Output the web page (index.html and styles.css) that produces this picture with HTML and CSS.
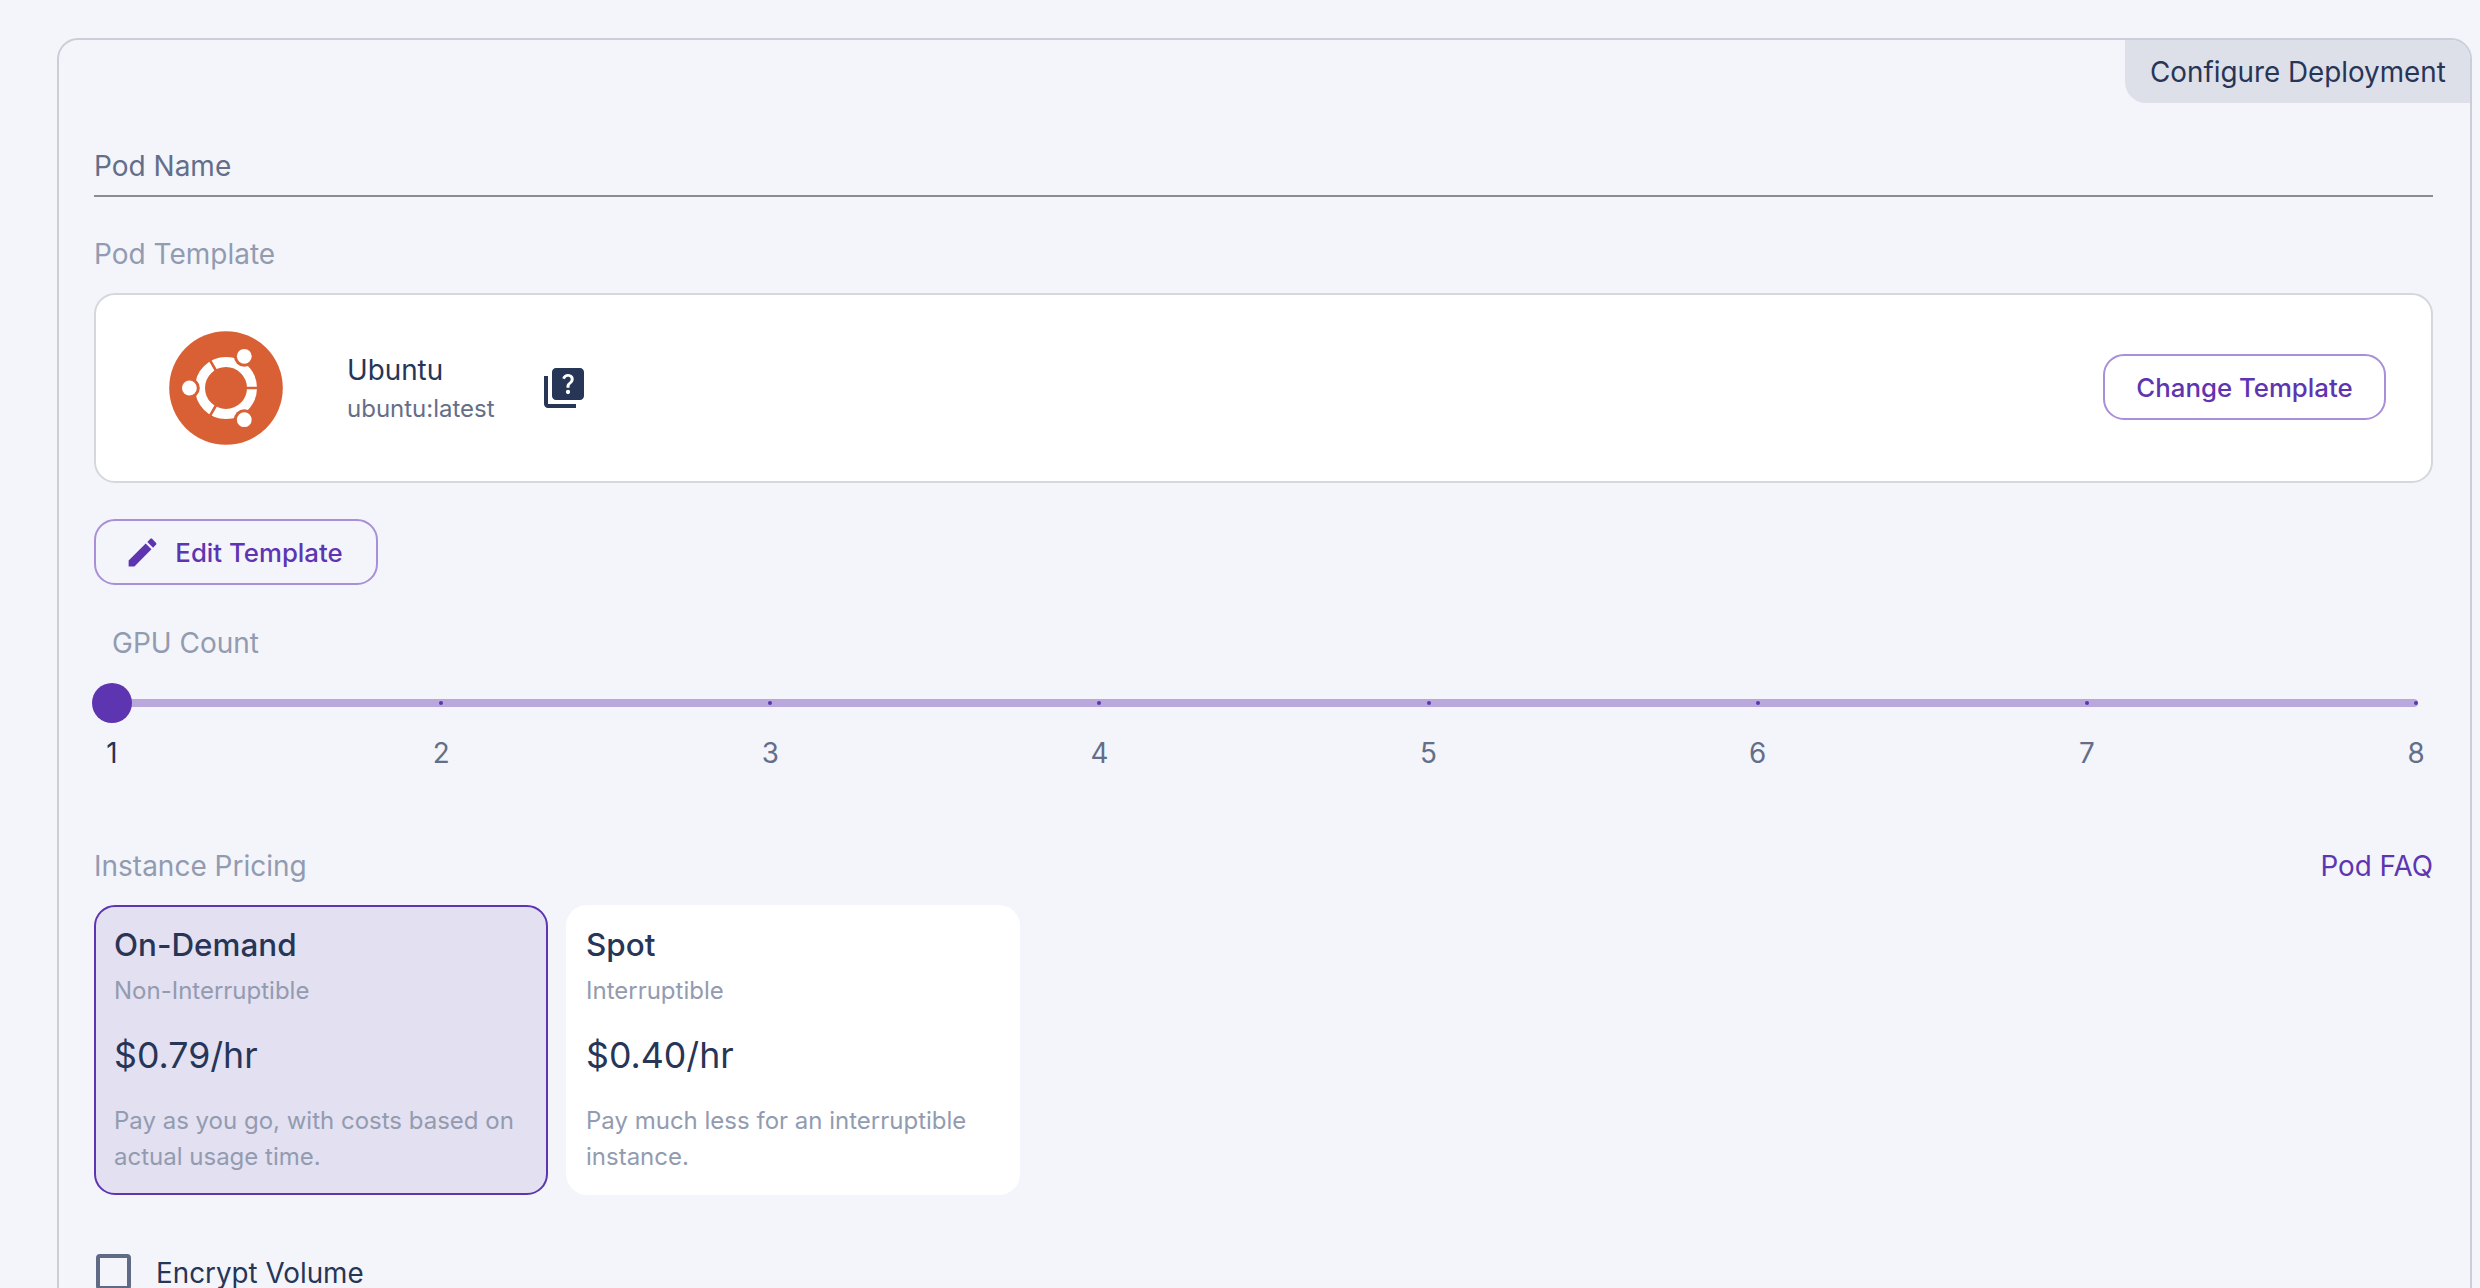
FILE: index.html
```html
<!DOCTYPE html>
<html lang="en">
<head>
    <meta charset="UTF-8">
    <meta name="viewport" content="width=device-width, initial-scale=1.0">
    <title>Configure Deployment</title>
    <link rel="stylesheet" href="styles.css">
</head>
<body>
    <div class="panel">
        <div class="panel-tab">Configure Deployment</div>

        <!-- Pod name -->
        <div class="name-field">Pod Name</div>

        <!-- Template -->
        <div class="field-label template-label">Pod Template</div>
        <div class="template-card">
            <svg class="ubuntu-logo" viewBox="0 0 114 114" aria-hidden="true">
                <circle cx="57" cy="57" r="56.8" fill="#d96034"/>
                <circle cx="57" cy="57" r="26" fill="none" stroke="#fff" stroke-width="10"/>
                <path d="M76 57H90M47.5 40.5L40.5 28.4M47.5 73.5L40.5 85.6" stroke="#d96034" stroke-width="2.6"/>
                <circle cx="75.3" cy="25.3" r="10.4" fill="#d96034"/>
                <circle cx="75.3" cy="88.7" r="10.4" fill="#d96034"/>
                <circle cx="20.4" cy="57" r="10.4" fill="#d96034"/>
                <circle cx="75.3" cy="25.3" r="7.4" fill="#fff"/>
                <circle cx="75.3" cy="88.7" r="7.4" fill="#fff"/>
                <circle cx="20.4" cy="57" r="7.4" fill="#fff"/>
            </svg>
            <div class="template-info">
                <div class="template-name">Ubuntu</div>
                <div class="template-image">ubuntu:latest</div>
            </div>
            <svg class="quiz-icon" viewBox="0 0 24 24" aria-hidden="true">
                <path d="M4 6H2v14c0 1.1.9 2 2 2h14v-2H4V6zm16-4H8c-1.1 0-2 .9-2 2v12c0 1.1.9 2 2 2h12c1.1 0 2-.9 2-2V4c0-1.1-.9-2-2-2zm-5.99 13c-.59 0-1.05-.47-1.05-1.05 0-.59.47-1.04 1.05-1.04.59 0 1.04.45 1.04 1.04-.01.58-.45 1.05-1.04 1.05zm2.5-6.17c-.63.93-1.23 1.21-1.56 1.81-.13.24-.18.4-.18 1.18h-1.52c0-.41-.06-1.08.26-1.65.41-.73 1.18-1.16 1.63-1.8.48-.68.21-1.94-1.14-1.94-.88 0-1.32.67-1.5 1.23l-1.37-.57C11.51 5.96 12.52 5 13.99 5c1.23 0 2.08.56 2.51 1.26.37.61.58 1.73.01 2.57z"/>
            </svg>
            <button class="outline-btn change-btn">Change Template</button>
        </div>

        <button class="outline-btn edit-btn">
            <svg class="edit-icon" viewBox="0 0 24 24" aria-hidden="true">
                <path d="M3 17.25V21h3.75L17.81 9.94l-3.75-3.75L3 17.25zM20.71 7.04c.39-.39.39-1.02 0-1.41l-2.34-2.34c-.39-.39-1.02-.39-1.41 0l-1.83 1.83 3.75 3.75 1.83-1.83z"/>
            </svg>
            Edit Template
        </button>

        <!-- GPU slider -->
        <div class="field-label gpu-label">GPU Count</div>
        <div class="slider">
            <div class="slider-track">
                <span class="slider-mark"></span>
                <span class="slider-mark"></span>
                <span class="slider-mark"></span>
                <span class="slider-mark"></span>
                <span class="slider-mark"></span>
                <span class="slider-mark"></span>
                <span class="slider-mark"></span>
                <span class="slider-mark"></span>
            </div>
            <div class="slider-thumb"></div>
        </div>
        <div class="slider-labels">
            <span class="slider-label current">1</span>
            <span class="slider-label">2</span>
            <span class="slider-label">3</span>
            <span class="slider-label">4</span>
            <span class="slider-label">5</span>
            <span class="slider-label">6</span>
            <span class="slider-label">7</span>
            <span class="slider-label">8</span>
        </div>

        <!-- Pricing -->
        <div class="pricing-header">
            <span class="field-label">Instance Pricing</span>
            <a class="faq-link" href="#">Pod FAQ</a>
        </div>
        <div class="pricing-cards">
            <div class="price-card selected">
                <div class="price-title">On-Demand</div>
                <div class="price-sub">Non-Interruptible</div>
                <div class="price-value">$0.79/hr</div>
                <div class="price-desc">Pay as you go, with costs based on actual usage time.</div>
            </div>
            <div class="price-card">
                <div class="price-title">Spot</div>
                <div class="price-sub">Interruptible</div>
                <div class="price-value">$0.40/hr</div>
                <div class="price-desc">Pay much less for an interruptible instance.</div>
            </div>
        </div>

        <div class="check-row">
            <span class="checkbox"></span>
            <span class="check-label">Encrypt Volume</span>
        </div>
    </div>
</body>
</html>
```

FILE: styles.css
```css
* {
    box-sizing: border-box;
}
html, body {
    height: 1288px;
    overflow: hidden;
}
body {
    margin: 0;
    background-color: #f3f5fa;
    font-family: Inter, "Noto Sans", sans-serif;
    font-size: 27.8px;
    line-height: 40px;
    color: #273557;
}
.panel {
    position: relative;
    margin: 38px 8px 0 57px;
    min-height: 1400px;
    padding: 106px 37px 0 35px;
    border: 2px solid #c9ced9;
    border-radius: 21px;
}
.panel-tab {
    position: absolute;
    top: 0;
    right: 0;
    width: 345px;
    height: 63px;
    padding: 12px 0 0 25px;
    background-color: #dde0e8;
    border-radius: 0 19px 0 21px;
}
.name-field {
    height: 51px;
    border-bottom: 2px solid #8c8c90;
    font-size: 28px;
    color: #646e89;
}
.field-label {
    font-size: 28px;
    color: #929bb0;
}
.template-label {
    margin-top: 37px;
}
.template-card {
    display: flex;
    align-items: center;
    height: 190px;
    margin-top: 19px;
    padding: 0 45px 0 73px;
    background-color: #fff;
    border: 2px solid #d5d7de;
    border-radius: 21px;
}
.ubuntu-logo {
    width: 114px;
    height: 114px;
    flex: none;
}
.template-info {
    margin-left: 64px;
}
.template-name {
    line-height: 40px;
}
.template-image {
    margin-top: 1px;
    font-size: 24px;
    line-height: 36px;
    color: #646e89;
}
.quiz-icon {
    width: 48px;
    height: 48px;
    margin-left: 45px;
    margin-right: auto;
    fill: #273557;
}
.outline-btn {
    display: flex;
    align-items: center;
    justify-content: center;
    height: 66px;
    background: transparent;
    border: 2px solid #a98fd8;
    border-radius: 21px;
    color: #5e35b1;
    font-family: inherit;
    font-size: 25.8px;
    font-weight: 500;
    cursor: pointer;
}
.change-btn {
    width: 283px;
    margin-bottom: 2px;
}
.edit-btn {
    width: 284px;
    margin-top: 36px;
    gap: 14px;
    padding-right: 11px;
}
.edit-icon {
    width: 37px;
    height: 37px;
    fill: #5e35b1;
}
.gpu-label {
    margin-top: 38px;
    padding-left: 18px;
}
.slider {
    position: relative;
    height: 40px;
    margin-top: 20px;
    padding-top: 16px;
}
.slider-track {
    display: flex;
    align-items: center;
    justify-content: space-between;
    height: 8px;
    margin: 0 15px 0 16px;
    background-color: #b9a8dc;
    border-radius: 4px;
}
.slider-mark {
    width: 4px;
    height: 4px;
    background-color: #5e35b1;
    border-radius: 50%;
}
.slider-thumb {
    position: absolute;
    top: 0;
    left: -2px;
    width: 40px;
    height: 40px;
    background-color: #5e35b1;
    border-radius: 50%;
}
.slider-labels {
    display: flex;
    justify-content: space-between;
    margin: 10px -3px 0 -2px;
    color: #646e89;
}
.slider-label {
    width: 40px;
    text-align: center;
}
.slider-label.current {
    color: #273557;
}
.pricing-header {
    display: flex;
    justify-content: space-between;
    margin-top: 73px;
}
.faq-link {
    color: #5e35b1;
    text-decoration: none;
}
.pricing-cards {
    display: flex;
    gap: 18px;
    margin-top: 19px;
}
.price-card {
    width: 454px;
    height: 290px;
    padding: 16px 18px 0;
    background-color: #fff;
    border: 2px solid transparent;
    border-radius: 21px;
}
.price-card.selected {
    background-color: #e3e0f1;
    border-color: #5e35b1;
}
.price-title {
    font-size: 31.4px;
    font-weight: 550;
    line-height: 44px;
}
.price-sub {
    margin-top: 6px;
    font-size: 24px;
    line-height: 36px;
    color: #929bb0;
}
.price-value {
    margin-top: 21px;
    font-size: 35.7px;
    line-height: 50px;
}
.price-desc {
    margin-top: 23px;
    font-size: 24px;
    line-height: 36px;
    color: #929bb0;
}
.check-row {
    display: flex;
    align-items: center;
    gap: 25px;
    height: 36px;
    margin-top: 59px;
    padding-left: 2px;
}
.check-label {
    padding-top: 2px;
}
.checkbox {
    width: 35px;
    height: 36px;
    border: 4px solid #5f6a85;
    border-radius: 4px;
}
```
